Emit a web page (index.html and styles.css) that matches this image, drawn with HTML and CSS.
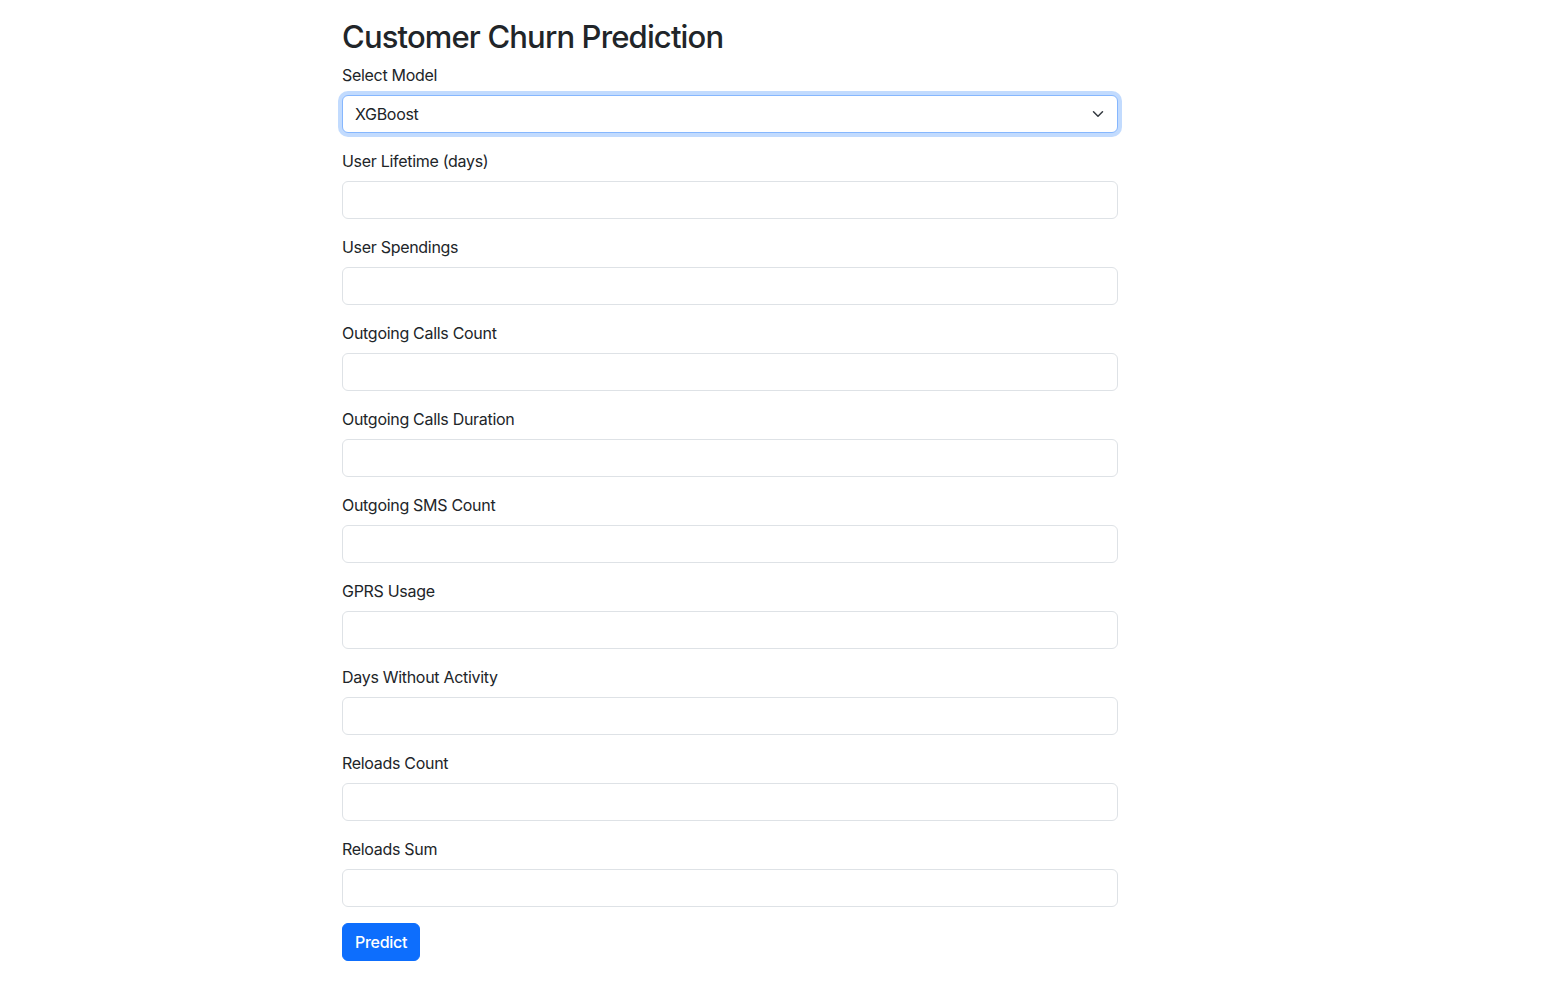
FILE: index.html
```html
<!DOCTYPE html>
<html lang="en">
<head>
<meta charset="utf-8">
<title>Customer Churn Prediction</title>
<link rel="stylesheet" href="styles.css">
</head>
<body>
<main class="page">
  <h1 class="title">Customer Churn Prediction</h1>
  <form class="form">
    <div class="group">
      <label class="label" for="model">Select Model</label>
      <div class="select-wrap">
        <select id="model" class="control select focused">
          <option>XGBoost</option>
        </select>
        <svg class="chevron" viewBox="0 0 16 16" width="16" height="12" aria-hidden="true"><path d="m2 5 6 6 6-6" fill="none" stroke="#343a40" stroke-width="2" stroke-linecap="round" stroke-linejoin="round"/></svg>
      </div>
    </div>
    <div class="group"><label class="label">User Lifetime (days)</label><input class="control" type="text"></div>
    <div class="group"><label class="label">User Spendings</label><input class="control" type="text"></div>
    <div class="group"><label class="label">Outgoing Calls Count</label><input class="control" type="text"></div>
    <div class="group"><label class="label">Outgoing Calls Duration</label><input class="control" type="text"></div>
    <div class="group"><label class="label">Outgoing SMS Count</label><input class="control" type="text"></div>
    <div class="group"><label class="label">GPRS Usage</label><input class="control" type="text"></div>
    <div class="group"><label class="label">Days Without Activity</label><input class="control" type="text"></div>
    <div class="group"><label class="label">Reloads Count</label><input class="control" type="text"></div>
    <div class="group"><label class="label">Reloads Sum</label><input class="control" type="text"></div>
    <button type="button" class="btn">Predict</button>
  </form>
</main>
</body>
</html>
```
FILE: styles.css
```css
* { box-sizing: border-box; }
html, body { margin: 0; padding: 0; background: #fff; }
body {
  font-family: Inter, "Noto Sans", "Liberation Sans", sans-serif;
  font-size: 16px;
  line-height: 24px;
  color: #212529;
  letter-spacing: -0.3px;
}
.page {
  width: 776px;
  margin-left: 342px;
  padding-top: 18px;
}
.title {
  margin: 0 0 7px 0;
  font-size: 31px;
  line-height: 38px;
  font-weight: 500;
  letter-spacing: -0.85px;
}
.form { display: flex; flex-direction: column; }
.group { display: flex; flex-direction: column; margin-bottom: 16px; }
.label { display: block; margin-bottom: 8px; font-size: 16px; line-height: 24px; }
.control {
  display: block;
  width: 100%;
  height: 38px;
  padding: 6px 12px;
  font: inherit;
  letter-spacing: inherit;
  color: #212529;
  background: #fff;
  border: 1px solid #dee2e6;
  border-radius: 6px;
  outline: none;
}
.select-wrap { position: relative; }
.select { appearance: none; -webkit-appearance: none; padding-right: 36px; }
.focused {
  border-color: #86b7fe;
  box-shadow: 0 0 0 4px rgba(13, 110, 253, 0.25);
}
.chevron {
  position: absolute;
  right: 12px;
  top: 13px;
  pointer-events: none;
}
.btn {
  align-self: flex-start;
  height: 38px;
  padding: 6px 12px;
  font: inherit;
  letter-spacing: inherit;
  font-weight: 500;
  color: #fff;
  background: #0d6efd;
  border: 1px solid #0d6efd;
  border-radius: 6px;
}
```
